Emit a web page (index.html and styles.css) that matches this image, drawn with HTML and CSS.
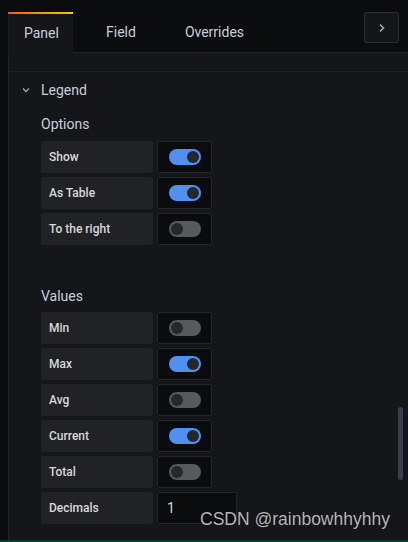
FILE: index.html
```html
<!DOCTYPE html>
<html lang="en">

<head>
  <meta charset="UTF-8">
  <meta name="viewport" content="width=device-width, initial-scale=1.0">
  <title>Panel options</title>

  <link rel="stylesheet" href="styles.css">
</head>

<body>
  <div id="editor">
    <div class="tabs">
      <div class="tab active">Panel</div>
      <div class="tab">Field</div>
      <div class="tab">Overrides</div>
      <div class="tab-btn">
        <svg width="8" height="10" viewBox="0 0 8 10"><path d="M2 1.5 5.5 5 2 8.5" fill="none" stroke="#9fa7b3" stroke-width="1.6"/></svg>
      </div>
    </div>

    <div class="pane">
      <div class="pane-head"></div>
      <div class="pane-body">
        <div class="group-title">
          <svg class="chevron" width="8" height="6" viewBox="0 0 8 6"><path d="M1 1.5 4 4.5 7 1.5" fill="none" stroke="#9fa7b3" stroke-width="1.3"/></svg>
          Legend
        </div>

        <div class="section">
          <div class="section-title">Options</div>
          <div class="field"><div class="label">Show</div><div class="box"><span class="switch on"></span></div></div>
          <div class="field"><div class="label">As Table</div><div class="box"><span class="switch on"></span></div></div>
          <div class="field"><div class="label">To the right</div><div class="box"><span class="switch"></span></div></div>
        </div>

        <div class="section values">
          <div class="section-title">Values</div>
          <div class="field"><div class="label">Min</div><div class="box"><span class="switch"></span></div></div>
          <div class="field"><div class="label">Max</div><div class="box"><span class="switch on"></span></div></div>
          <div class="field"><div class="label">Avg</div><div class="box"><span class="switch"></span></div></div>
          <div class="field"><div class="label">Current</div><div class="box"><span class="switch on"></span></div></div>
          <div class="field"><div class="label">Total</div><div class="box"><span class="switch"></span></div></div>
          <div class="field"><div class="label">Decimals</div><div class="input">1</div></div>
        </div>
      </div>
      <div class="scrollbar"></div>
    </div>
  </div>
  <div class="bottom-strip"></div>

  <div class="watermark">CSDN @rainbowhhyhhy</div>
</body>

</html>
```

FILE: styles.css
```css
body {
  margin: 0;
  width: 408px;
  height: 542px;
  overflow: hidden;
  background-color: #0b0c0e;
  color: #c7d0d9;
  font-family: Roboto, "Liberation Sans", sans-serif;
  display: flex;
  flex-direction: column;
  position: relative;
}

#editor {
  flex: 1;
  display: flex;
  flex-direction: column;
  padding-top: 12px;
  min-height: 0;
}

.tabs {
  display: flex;
  height: 40px;
  gap: 17px;
  padding-left: 8px;
  padding-right: 9px;
}

.tab {
  padding: 0 16px;
  display: flex;
  align-items: center;
  font-size: 14px;
  color: #c7d0d9;
}

.tab.active {
  position: relative;
  width: 33px;
  padding: 0 16px 0 15px;
  background-color: #141619;
  border-left: 1px solid #1c1e22;
  margin-bottom: -1px;
  z-index: 1;
}

.tab.active::before {
  content: "";
  position: absolute;
  top: 0;
  left: -1px;
  right: 0;
  height: 2px;
  background: linear-gradient(90deg, #f05a28, #fbca0a);
}

.tab-btn {
  margin-left: auto;
  width: 33px;
  height: 29px;
  border: 1px solid #2a2d32;
  border-radius: 2px;
  background-color: #141619;
  display: flex;
  align-items: center;
  justify-content: center;
}

.pane {
  flex: 1;
  position: relative;
  margin-left: 8px;
  background-color: #141619;
  border-top: 1px solid #202226;
  border-left: 1px solid #202226;
  overflow: hidden;
}

.pane-head {
  height: 18px;
  border-bottom: 1px solid #202226;
}

.group-title {
  height: 36px;
  display: flex;
  align-items: center;
  padding-left: 13px;
  font-size: 14px;
}

.chevron {
  margin-right: 11px;
}

.section {
  padding-left: 32px;
}

.section-title {
  height: 22px;
  line-height: 22px;
  font-size: 14px;
  margin-top: 5px;
  margin-bottom: 6px;
}

.values {
  margin-top: 40px;
}

.values .section-title {
  margin-bottom: 5px;
}

.field {
  display: flex;
  gap: 4px;
  height: 32px;
  margin-bottom: 4px;
}

.label {
  width: 104px;
  padding-left: 8px;
  background-color: #202226;
  border-radius: 2px;
  display: flex;
  align-items: center;
  font-size: 12px;
  font-weight: 500;
  color: #d8d9da;
}

.box {
  width: 55px;
  border: 1px solid #24262b;
  border-radius: 2px;
  background-color: #0b0c0e;
  display: flex;
  align-items: center;
  padding-left: 11px;
  box-sizing: border-box;
}

.switch {
  position: relative;
  width: 32px;
  height: 16px;
  border-radius: 8px;
  background-color: #58595c;
}

.switch::after {
  content: "";
  position: absolute;
  top: 2px;
  left: 2px;
  width: 12px;
  height: 12px;
  border-radius: 50%;
  background-color: #26272b;
}

.switch.on {
  background-color: #5290f0;
}

.switch.on::after {
  left: 18px;
}

.input {
  width: 69px;
  padding-left: 9px;
  border: 1px solid #24262b;
  border-radius: 2px;
  background-color: #0b0c0e;
  display: flex;
  align-items: center;
  font-size: 14px;
  color: #d8d9da;
}

.scrollbar {
  position: absolute;
  right: 5px;
  top: 354px;
  width: 5px;
  height: 73px;
  border-radius: 3px;
  background-color: #3b3e48;
}

.bottom-strip {
  height: 2px;
  background-color: #0e3a33;
}

.watermark {
  position: absolute;
  left: 200px;
  top: 509px;
  font-family: "Liberation Sans", Arial, sans-serif;
  font-size: 17.5px;
  color: rgba(215, 215, 215, 0.85);
  text-shadow: 0 0 1px rgba(0, 0, 0, 0.6);
}
```
